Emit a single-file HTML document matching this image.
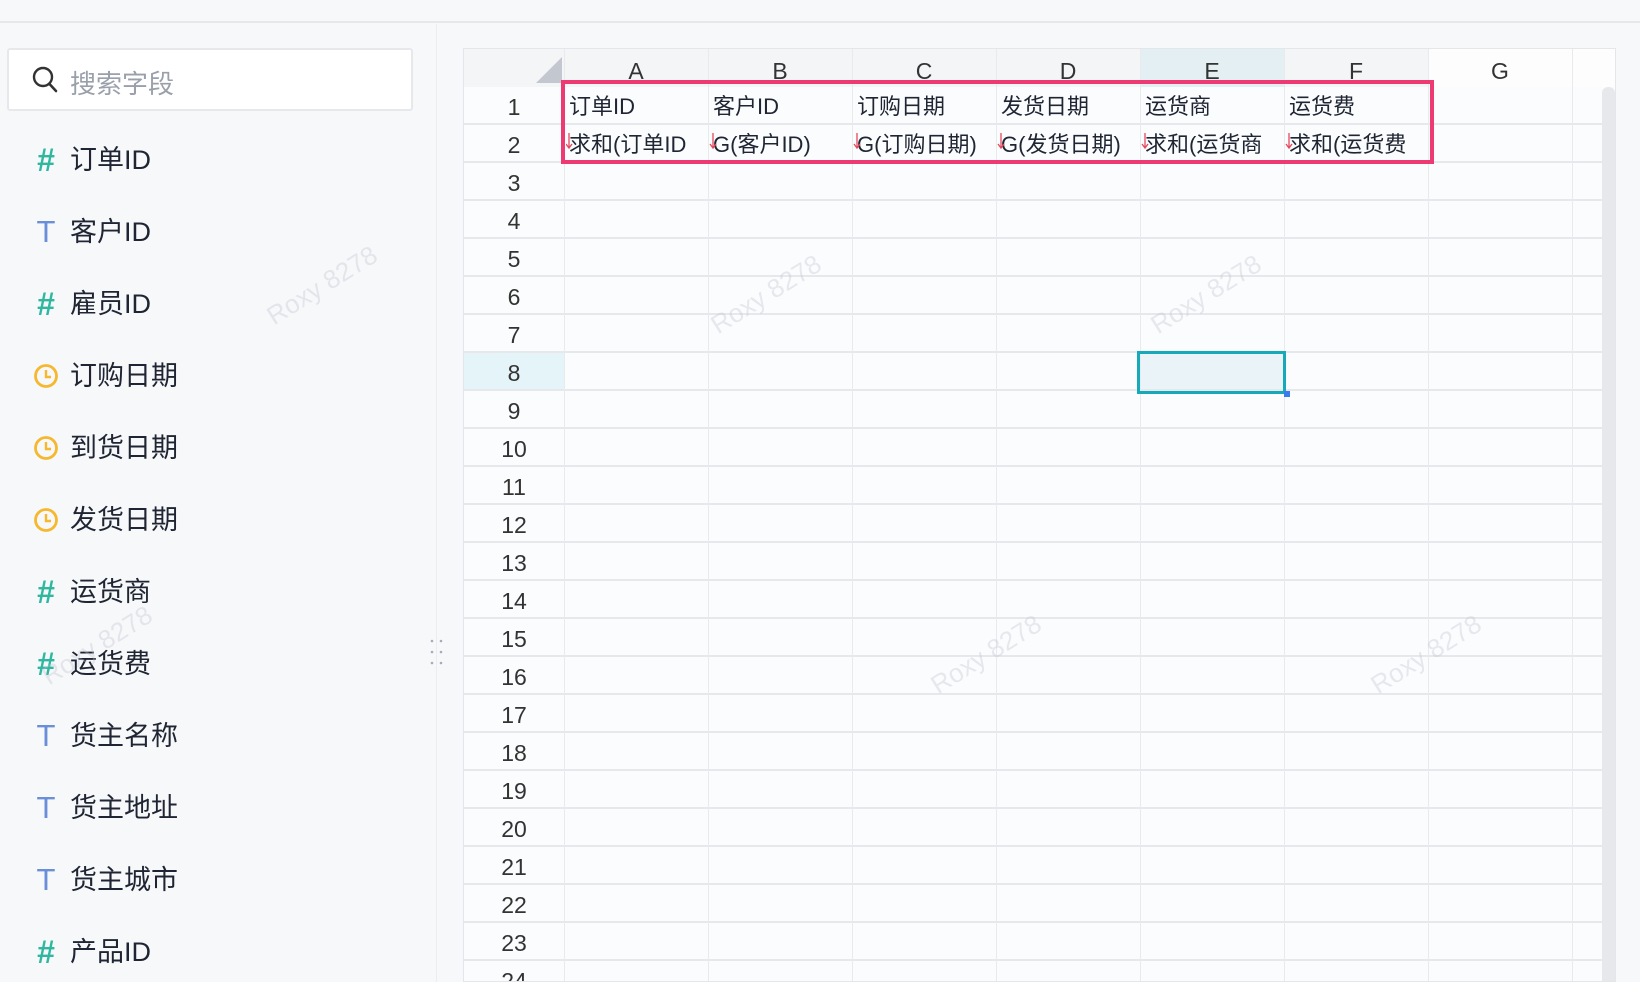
<!DOCTYPE html>
<html><head><meta charset="utf-8"><style>
*{margin:0;padding:0;box-sizing:border-box}
body{width:1640px;height:982px;overflow:hidden;background:#f7f8fa;font-family:"Liberation Sans","Noto Sans CJK SC",sans-serif;position:relative;color:#1f2533}
.topbar{position:absolute;left:0;top:0;width:1640px;height:23px;background:#f7f8fa;border-bottom:2px solid #e6e8ec}
.side{position:absolute;left:0;top:24px;width:437px;height:958px;border-right:1px solid #ebedf0;background:#f7f8fa}
.search{position:absolute;left:7px;top:48px;width:406px;height:63px;background:#fff;border:2px solid #e6e8ec;border-radius:3px}
.search span{position:absolute;left:61px;top:14px;font-size:26px;color:#9aa0ab}
.item{position:absolute;left:0;height:40px;font-size:27px;line-height:40px}
.item .ic{position:absolute;left:31px;width:30px;text-align:center;font-weight:bold}
.item .tx{position:absolute;left:70px;white-space:nowrap}
.hash{color:#2fb7a0;font-size:32px}
.tt{color:#6a8fd8;font-weight:normal!important;font-size:31px}
.grid{position:absolute;left:463px;top:48px;width:1153px;height:934px;background:#fbfcfd;border:1px solid #e4e6ea;overflow:hidden}
.lines{position:absolute;left:0;top:38px;width:1153px;height:900px;background:repeating-linear-gradient(to bottom,transparent 0 36px,#e6e8ec 36px 38px)}
.vlines{position:absolute;left:100px;top:0;width:1053px;height:934px;background:repeating-linear-gradient(to right,#e8eaee 0 1px,transparent 1px 144px)}
.colh{position:absolute;top:0;height:38px;width:144px;text-align:center;font-size:23px;line-height:44px;color:#333}
.rown{position:absolute;left:0;width:100px;height:38px;text-align:center;font-size:23px;line-height:40px;color:#333}
.cell{position:absolute;font-size:22px;white-space:nowrap;overflow:hidden;width:142px;height:36px;line-height:38px;padding-left:4px;color:#1f2533}
.arr{position:absolute;left:1px;top:6px}
.wm{position:absolute;color:rgba(190,195,205,0.35);font-size:26px;transform:rotate(-32deg);white-space:nowrap}
</style></head><body>
<div class="topbar"></div>
<div class="side"></div>
<div class="search">
<svg style="position:absolute;left:22px;top:15px" width="28" height="30" viewBox="0 0 28 30"><circle cx="12" cy="12" r="9" fill="none" stroke="#333" stroke-width="2.4"/><path d="M18.5 19 L25 26" stroke="#333" stroke-width="2.6" stroke-linecap="round"/></svg>
<span>搜索字段</span></div>

<div class="item" style="top:140px"><span class="ic hash">#</span><span class="tx">订单ID</span></div>
<div class="item" style="top:212px"><span class="ic tt">T</span><span class="tx">客户ID</span></div>
<div class="item" style="top:284px"><span class="ic hash">#</span><span class="tx">雇员ID</span></div>
<div class="item" style="top:356px"><span class="ic"><svg width="30" height="40" viewBox="0 0 30 40"><circle cx="15" cy="20" r="10.5" fill="none" stroke="#f5b82e" stroke-width="2.8"/><path d="M15 14v7h5" fill="none" stroke="#f5b82e" stroke-width="2.4"/></svg></span><span class="tx">订购日期</span></div>
<div class="item" style="top:428px"><span class="ic"><svg width="30" height="40" viewBox="0 0 30 40"><circle cx="15" cy="20" r="10.5" fill="none" stroke="#f5b82e" stroke-width="2.8"/><path d="M15 14v7h5" fill="none" stroke="#f5b82e" stroke-width="2.4"/></svg></span><span class="tx">到货日期</span></div>
<div class="item" style="top:500px"><span class="ic"><svg width="30" height="40" viewBox="0 0 30 40"><circle cx="15" cy="20" r="10.5" fill="none" stroke="#f5b82e" stroke-width="2.8"/><path d="M15 14v7h5" fill="none" stroke="#f5b82e" stroke-width="2.4"/></svg></span><span class="tx">发货日期</span></div>
<div class="item" style="top:572px"><span class="ic hash">#</span><span class="tx">运货商</span></div>
<div class="item" style="top:644px"><span class="ic hash">#</span><span class="tx">运货费</span></div>
<div class="item" style="top:716px"><span class="ic tt">T</span><span class="tx">货主名称</span></div>
<div class="item" style="top:788px"><span class="ic tt">T</span><span class="tx">货主地址</span></div>
<div class="item" style="top:860px"><span class="ic tt">T</span><span class="tx">货主城市</span></div>
<div class="item" style="top:932px"><span class="ic hash">#</span><span class="tx">产品ID</span></div>

<svg style="position:absolute;left:428px;top:638px" width="18" height="36"><g fill="#aab"><circle cx="4" cy="3" r="1.3"/><circle cx="13" cy="3" r="1.3"/><circle cx="4" cy="14" r="1.3"/><circle cx="13" cy="14" r="1.3"/><circle cx="4" cy="25" r="1.3"/><circle cx="13" cy="25" r="1.3"/></g></svg>

<div class="grid">
<div style="position:absolute;left:0;top:0;width:1153px;height:38px;background:#f4f5f7"></div>
<div style="position:absolute;left:676px;top:0;width:144px;height:38px;background:#e3eff3"></div>
<div style="position:absolute;left:964px;top:0;width:189px;height:38px;background:#fdfdfe"></div>
<div style="position:absolute;left:0;top:304px;width:100px;height:38px;background:#e5f4f8"></div>
<div style="position:absolute;left:676px;top:304px;width:144px;height:38px;background:#eaf4f8"></div>
<div class="lines"></div>
<div class="vlines"></div>
<svg style="position:absolute;left:70px;top:8px" width="30" height="26"><path d="M28 0 L28 26 L2 26 Z" fill="#c3c7cf"/></svg>
<div class="colh" style="left:100px">A</div><div class="colh" style="left:244px">B</div><div class="colh" style="left:388px">C</div><div class="colh" style="left:532px">D</div><div class="colh" style="left:676px">E</div><div class="colh" style="left:820px">F</div><div class="colh" style="left:964px">G</div>
<div class="rown" style="top:38px">1</div><div class="rown" style="top:76px">2</div><div class="rown" style="top:114px">3</div><div class="rown" style="top:152px">4</div><div class="rown" style="top:190px">5</div><div class="rown" style="top:228px">6</div><div class="rown" style="top:266px">7</div><div class="rown" style="top:304px">8</div><div class="rown" style="top:342px">9</div><div class="rown" style="top:380px">10</div><div class="rown" style="top:418px">11</div><div class="rown" style="top:456px">12</div><div class="rown" style="top:494px">13</div><div class="rown" style="top:532px">14</div><div class="rown" style="top:570px">15</div><div class="rown" style="top:608px">16</div><div class="rown" style="top:646px">17</div><div class="rown" style="top:684px">18</div><div class="rown" style="top:722px">19</div><div class="rown" style="top:760px">20</div><div class="rown" style="top:798px">21</div><div class="rown" style="top:836px">22</div><div class="rown" style="top:874px">23</div><div class="rown" style="top:912px">24</div>

<div class="cell" style="left:101px;top:39px">订单ID</div>
<div class="cell" style="left:245px;top:39px">客户ID</div>
<div class="cell" style="left:389px;top:39px">订购日期</div>
<div class="cell" style="left:533px;top:39px">发货日期</div>
<div class="cell" style="left:677px;top:39px">运货商</div>
<div class="cell" style="left:821px;top:39px">运货费</div>
<div class="cell" style="left:101px;top:77px">求和(订单ID</div>
<div class="cell" style="left:245px;top:77px">G(客户ID)</div>
<div class="cell" style="left:389px;top:77px">G(订购日期)</div>
<div class="cell" style="left:533px;top:77px">G(发货日期)</div>
<div class="cell" style="left:677px;top:77px">求和(运货商</div>
<div class="cell" style="left:821px;top:77px">求和(运货费</div>
<svg style="position:absolute;left:102px;top:83px" width="800" height="20"><g stroke="#e8485f" stroke-width="1.3" fill="none"><path d="M3 1v15M0 12l3 4 3-4"/><path d="M147 1v15M144 12l3 4 3-4"/><path d="M291 1v15M288 12l3 4 3-4"/><path d="M435 1v15M432 12l3 4 3-4"/><path d="M579 1v15M576 12l3 4 3-4"/><path d="M723 1v15M720 12l3 4 3-4"/></g></svg>

<div style="position:absolute;left:97px;top:31px;width:873px;height:84px;border:4px solid #ee3a72"></div>
<div style="position:absolute;left:673px;top:302px;width:149px;height:43px;border:3px solid #16a9ba"></div>
<div style="position:absolute;left:820px;top:342px;width:6px;height:6px;background:#3a7bf0"></div>
<div style="position:absolute;left:1138px;top:38px;width:13px;height:900px;background:#e6e8ec;border-radius:6px"></div>

<div class="wm" style="left:-200px;top:600px">Roxy 8278</div>
<div class="wm" style="left:240px;top:230px">Roxy 8278</div>
<div class="wm" style="left:680px;top:230px">Roxy 8278</div>
<div class="wm" style="left:460px;top:590px">Roxy 8278</div>
<div class="wm" style="left:900px;top:590px">Roxy 8278</div>
</div>
<div class="wm" style="left:260px;top:270px">Roxy 8278</div>
<div class="wm" style="left:35px;top:630px">Roxy 8278</div>
</body></html>
